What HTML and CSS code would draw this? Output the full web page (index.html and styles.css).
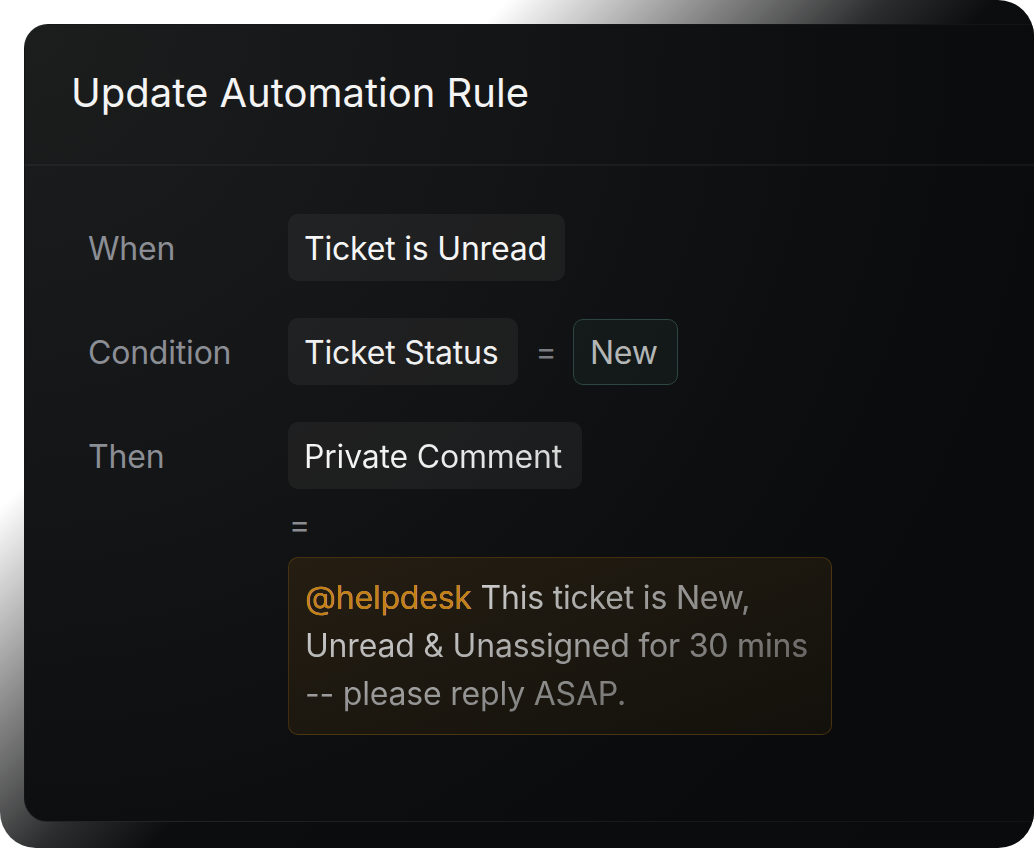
FILE: index.html
```html
<!DOCTYPE html>
<html lang="en">
<head>
<meta charset="utf-8">
<title>Update Automation Rule</title>
<link rel="stylesheet" href="styles.css">
</head>
<body>
<div class="frame">
  <section class="card">
    <header class="card-head">
      <h1 class="title">Update Automation Rule</h1>
    </header>
    <div class="rules">
      <div class="label">When</div>
      <div class="value">
        <span class="chip">Ticket is Unread</span>
      </div>

      <div class="label">Condition</div>
      <div class="value">
        <span class="chip chip-status">Ticket Status</span>
        <span class="eq">=</span>
        <span class="chip chip-new">New</span>
      </div>

      <div class="label">Then</div>
      <div class="value value-col">
        <span class="chip chip-fade"><span class="chip-text">Private Comment</span></span>
        <span class="eq eq-below">=</span>
        <div class="comment">
          <p class="comment-text"><span class="mention">@helpdesk</span> <span class="msg">This ticket is New, Unread &amp; Unassigned for 30 mins -- please reply ASAP.</span></p>
        </div>
      </div>
    </div>
  </section>
</div>
</body>
</html>
```

FILE: styles.css
```css
* {
  box-sizing: border-box;
}

html, body {
  margin: 0;
  padding: 0;
  background: #ffffff;
}

body {
  font-family: Inter, "Noto Sans", "Liberation Sans", sans-serif;
  width: 1034px;
  height: 848px;
  overflow: hidden;
}

.frame {
  width: 1034px;
  height: 848px;
  border-radius: 36px;
  overflow: hidden;
  background: linear-gradient(135deg, #ffffff 0%, #ffffff 27%, #8a8a8a 37.8%, #2c2d2e 47%, #0c0d0e 53%, #0a0b0c 100%);
  padding: 24px 0 26px 24px;
  display: flex;
}

.card {
  flex: 1;
  border-radius: 24px 0 0 24px;
  border: 1px solid rgba(255, 255, 255, 0.035);
  border-right: none;
  background: radial-gradient(circle at 0 0, #1c1d1d 0, #161718 350px, #111213 620px, #0d0e0f 820px, #0a0b0c 1050px);
  display: flex;
  flex-direction: column;
}

.card-head {
  padding: 44px 48px 47px 46px;
  border-bottom: 2px solid rgba(255, 255, 255, 0.045);
}

.title {
  margin: 0;
  font-size: 40px;
  line-height: 48px;
  font-weight: 400;
  color: #f4f4f4;
}

.rules {
  padding: 48px 0 0 63px;
  display: grid;
  grid-template-columns: 200px 1fr;
  row-gap: 37px;
  align-items: start;
  letter-spacing: -0.2px;
}

.label {
  font-size: 32px;
  line-height: 39px;
  padding-top: 15px;
  color: #8b8e95;
}

.value {
  display: flex;
  align-items: center;
  gap: 17px;
}

.value-col {
  flex-direction: column;
  align-items: flex-start;
  gap: 0;
}

.chip {
  display: inline-block;
  font-size: 32px;
  line-height: 39px;
  padding: 15px 18px 13px 16px;
  border-radius: 10px;
  background: rgba(255, 255, 255, 0.05);
  color: #f6f6f6;
}

.chip-status {
  padding-right: 20px;
  color: #f0f0f0;
}

.chip-fade {
  padding-right: 20px;
}

.chip-text {
  color: transparent;
  background-image: linear-gradient(to right, #f6f6f6 0%, #eeeeee 50%, #d6d6d6 100%);
  -webkit-background-clip: text;
  background-clip: text;
}

.chip-new {
  background: rgba(58, 120, 104, 0.09);
  border: 1.5px solid #2c4741;
  padding: 13.5px 19px 11.5px 15.5px;
  color: #b4b6b6;
}

.eq {
  font-size: 32px;
  line-height: 39px;
  color: #7a7d81;
}

.eq-below {
  margin: 16px 0 13px 1px;
  color: #8a8d92;
}

.comment {
  width: 544px;
  border-radius: 10px;
  border: 1px solid rgba(196, 128, 18, 0.26);
  background: linear-gradient(160deg, #251d12 0%, #1b170f 55%, #13110c 100%);
  padding: 16px;
}

.comment-text {
  margin: 0;
  font-size: 32px;
  line-height: 48px;
  color: transparent;
  background-image:
    linear-gradient(to right, rgba(20, 18, 14, 0) 25%, rgba(20, 18, 14, 0.5) 100%),
    linear-gradient(to bottom, #dcdcdc 0%, #c4c4c4 45%, #8a8a8a 100%);
  -webkit-background-clip: text;
  background-clip: text;
}

.mention {
  color: #c47f12;
}
```
